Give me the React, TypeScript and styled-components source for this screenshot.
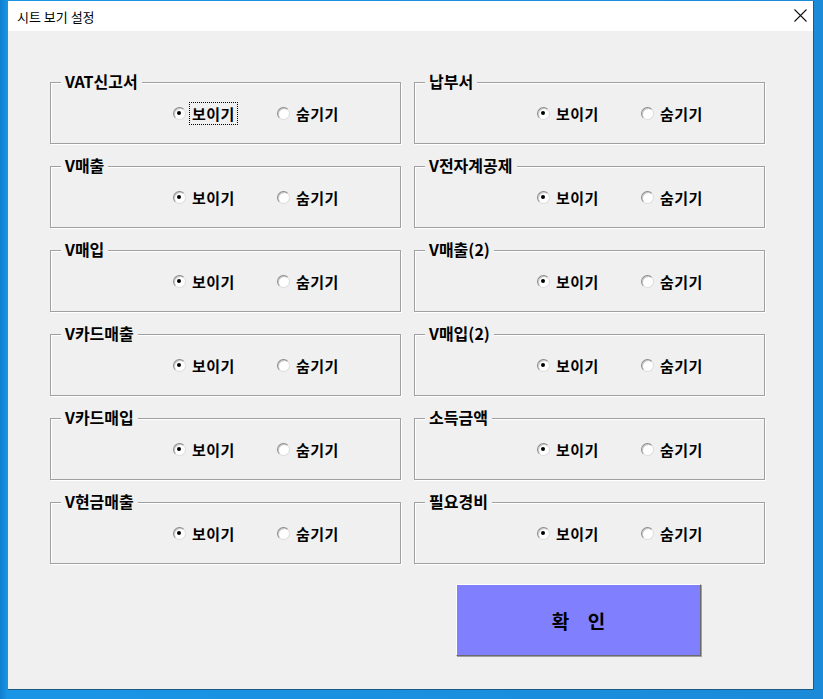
import styled, { createGlobalStyle } from "styled-components";

const GlobalStyle = createGlobalStyle`
  html, body {
    margin: 0;
    padding: 0;
    background: #1a8ad9;
  }
  body {
    font-family: "Noto Sans CJK KR", "Noto Sans", sans-serif;
  }
`;

interface Sheet {
  name: string;
  focused?: boolean;
}

const sheets: Sheet[] = [
  { name: "VAT신고서", focused: true },
  { name: "납부서" },
  { name: "V매출" },
  { name: "V전자계공제" },
  { name: "V매입" },
  { name: "V매출(2)" },
  { name: "V카드매출" },
  { name: "V매입(2)" },
  { name: "V카드매입" },
  { name: "소득금액" },
  { name: "V현금매출" },
  { name: "필요경비" },
];

const CloseIcon = () => (
  <svg width="13" height="13" viewBox="0 0 13 13">
    <path d="M0.5 0.5 L12.5 12.5 M12.5 0.5 L0.5 12.5" stroke="#111" strokeWidth="1.1" fill="none" />
  </svg>
);

const SheetGroup = ({ sheet }: { sheet: Sheet }) => (
  <Group>
    <Legend>{sheet.name}</Legend>
    <Options>
      <Option $width={104}>
        <Radio type="radio" name={sheet.name} defaultChecked />
        <Label $focused={sheet.focused}>보이기</Label>
      </Option>
      <Option>
        <Radio type="radio" name={sheet.name} />
        <Label>숨기기</Label>
      </Option>
    </Options>
  </Group>
);

const App = () => {
  return (
    <>
      <GlobalStyle />
      <Frame>
        <Window>
          <TitleBar>
            <Title>시트 보기 설정</Title>
            <CloseBtn>
              <CloseIcon />
            </CloseBtn>
          </TitleBar>
          <Client>
            <Grid>
              {sheets.map((s) => (
                <SheetGroup key={s.name} sheet={s} />
              ))}
              <ConfirmBtn>확 인</ConfirmBtn>
            </Grid>
          </Client>
        </Window>
      </Frame>
    </>
  );
};

export default App;

const Frame = styled.div`
  width: 823px;
  height: 699px;
  box-sizing: border-box;
  padding: 1px 9px 9px 8px;
  background: linear-gradient(90deg, #0f7fd0 0px, #1a95e6 8px, #1a8ad9 100%);
`;

const Window = styled.div`
  height: 100%;
  display: flex;
  flex-direction: column;
  border-right: 1px solid #1b5b86;
  border-bottom: 1px solid #1b5b86;
  box-sizing: border-box;
`;

const TitleBar = styled.div`
  height: 30px;
  background: #ffffff;
  display: flex;
  align-items: center;
  justify-content: space-between;
  padding: 0 6px 0 9px;
`;

const Title = styled.div`
  font-size: 13px;
  color: #000;
`;

const CloseBtn = styled.div`
  display: flex;
  align-items: center;
  margin-top: -1px;
`;

const Client = styled.div`
  flex: 1;
  background: #f0f0f0;
  padding: 51px 0 0 42px;
`;

const Grid = styled.div`
  display: grid;
  grid-template-columns: 351px 351px;
  grid-auto-rows: 62px;
  column-gap: 13px;
  row-gap: 22px;
`;

const Group = styled.div`
  position: relative;
  border: 1px solid #a0a0a0;
  box-shadow: inset 1px 1px 0 #ffffff, 1px 1px 0 #ffffff;
`;

const Legend = styled.span`
  position: absolute;
  top: -12px;
  left: 10px;
  padding: 0 4px;
  background: #f0f0f0;
  font-size: 16px;
  font-weight: 700;
  line-height: 20px;
  color: #000;
`;

const Options = styled.div`
  display: flex;
  align-items: center;
  padding: 19px 0 0 122px;
`;

const Option = styled.label<{ $width?: number }>`
  display: flex;
  align-items: center;
  width: ${(p) => (p.$width ? `${p.$width}px` : "auto")};
`;

const Radio = styled.input`
  appearance: none;
  margin: 0;
  width: 13px;
  height: 13px;
  border-radius: 50%;
  box-sizing: border-box;
  border: 1px solid #8a8a8a;
  border-right-color: #dcdcdc;
  border-bottom-color: #dcdcdc;
  background: #ffffff;
  box-shadow: inset 1px 1px 0 #c8c8c8;
  position: relative;

  &:checked::after {
    content: "";
    position: absolute;
    left: 3px;
    top: 3px;
    width: 4px;
    height: 4px;
    border-radius: 50%;
    background: #000;
  }
`;

const Label = styled.span<{ $focused?: boolean }>`
  margin-left: 3px;
  padding: 0 2px;
  font-size: 15px;
  font-weight: 700;
  letter-spacing: 0.5px;
  line-height: 21px;
  color: #000;
  border: 1px dotted ${(p) => (p.$focused ? "#000" : "transparent")};
`;

const ConfirmBtn = styled.button`
  grid-column: 2;
  margin: -2px 0 0 42px;
  width: 245px;
  height: 72px;
  background: #8080ff;
  border: 1px solid;
  border-color: #ffffff #6a6a6a #6a6a6a #ffffff;
  box-shadow: 1px 1px 0 #a0a0a0;
  font-family: "Noto Sans CJK KR", sans-serif;
  font-size: 19px;
  font-weight: 700;
  word-spacing: 14px;
  color: #000;
  padding: 0;
`;
